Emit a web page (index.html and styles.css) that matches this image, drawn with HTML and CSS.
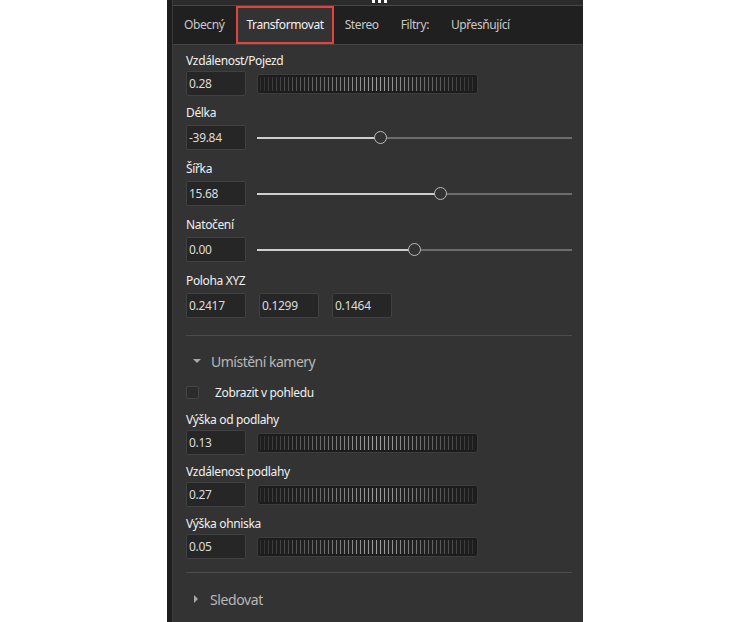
FILE: index.html
```html
<!DOCTYPE html>
<html>
<head>
<meta charset="utf-8">
<link rel="stylesheet" href="styles.css">
</head>
<body>
<div class="panel">
  <div class="inner">
    <div class="topbar"><div class="grip"><i></i><i></i><i></i></div></div>
    <div class="tabs">
      <div class="tab">Obecný</div>
      <div class="tab active">Transformovat</div>
      <div class="tab">Stereo</div>
      <div class="tab">Filtry:</div>
      <div class="tab">Upřesňující</div>
    </div>
    <div class="content">
      <div class="field jogfield">
        <div class="label">Vzdálenost/Pojezd</div>
        <div class="row"><div class="input">0.28</div><div class="jog"><div class="ticks"></div></div></div>
      </div>
      <div class="field slidefield">
        <div class="label">Délka</div>
        <div class="row"><div class="input">-39.84</div><div class="slider"><div class="fill" style="width:39.4%"></div><div class="thumb" style="left:39.4%"></div></div></div>
      </div>
      <div class="field slidefield">
        <div class="label">Šířka</div>
        <div class="row"><div class="input">15.68</div><div class="slider"><div class="fill" style="width:58.4%"></div><div class="thumb" style="left:58.4%"></div></div></div>
      </div>
      <div class="field slidefield">
        <div class="label">Natočení</div>
        <div class="row"><div class="input">0.00</div><div class="slider"><div class="fill" style="width:50.2%"></div><div class="thumb" style="left:50.2%"></div></div></div>
      </div>
      <div class="field xyzfield">
        <div class="label">Poloha XYZ</div>
        <div class="row xyz"><div class="input">0.2417</div><div class="input">0.1299</div><div class="input">0.1464</div></div>
      </div>
      <div class="sep"></div>
      <div class="expander"><span class="tri down"></span><span class="exp-text">Umístění kamery</span></div>
      <div class="check"><span class="box"></span><span class="check-text">Zobrazit v pohledu</span></div>
      <div class="field jogfield">
        <div class="label">Výška od podlahy</div>
        <div class="row"><div class="input">0.13</div><div class="jog"><div class="ticks"></div></div></div>
      </div>
      <div class="field jogfield">
        <div class="label">Vzdálenost podlahy</div>
        <div class="row"><div class="input">0.27</div><div class="jog"><div class="ticks"></div></div></div>
      </div>
      <div class="field jogfield last">
        <div class="label">Výška ohniska</div>
        <div class="row"><div class="input">0.05</div><div class="jog"><div class="ticks"></div></div></div>
      </div>
      <div class="sep sep2"></div>
      <div class="expander exp2"><span class="tri right"></span><span class="exp-text">Sledovat</span></div>
    </div>
  </div>
</div>
</body>
</html>
```
FILE: styles.css
```css
html, body {
  margin: 0;
  padding: 0;
  background: #ffffff;
  height: 622px;
  overflow: hidden;
  font-family: "Noto Sans", "Open Sans", sans-serif;
}
.panel {
  margin-left: 167px;
  width: 411px;
  height: 622px;
  background: #333333;
  border-left: 5px solid #1e1e1e;
}
.inner {
  height: 100%;
  border-left: 1px solid #3c3c3c;
  box-sizing: border-box;
}
.topbar {
  height: 5px;
  background: #2b2b2b;
  border-bottom: 1px solid #474747;
}
.grip {
  display: flex;
  gap: 3px;
  padding-left: 199px;
}
.grip i {
  display: block;
  width: 3px;
  height: 3px;
  background: #ffffff;
}
.tabs {
  display: flex;
  height: 38px;
  background: #202020;
  border-bottom: 1px solid #444444;
}
.tab {
  padding: 0 11px;
  line-height: 38px;
  font-size: 12px;
  letter-spacing: -0.4px;
  color: #c9c9c9;
}
.tab.active {
  background: #333333;
  color: #f2f2f2;
  box-shadow: inset 0 0 0 2px #e5423d;
  margin-left: 1px;
  padding: 0 10px;
}
.content {
  padding: 7px 11px 0 13px;
}
.label {
  height: 18px;
  line-height: 18px;
  font-size: 12px;
  letter-spacing: -0.35px;
  color: #f0f0f0;
}
.row {
  display: flex;
  align-items: center;
  gap: 11px;
  margin-top: 1px;
}
.field {
  margin-bottom: 8px;
}
.slidefield .row {
  margin-top: 3px;
}
.slidefield {
  margin-bottom: 10px;
}
.input {
  width: 60px;
  height: 25px;
  box-sizing: border-box;
  background: #262626;
  border: 1px solid #414141;
  border-radius: 2px;
  color: #dcdcdc;
  font-size: 12px;
  letter-spacing: -0.3px;
  line-height: 23px;
  padding-left: 2px;
  flex: none;
}
.jog {
  width: 221px;
  height: 20px;
  box-sizing: border-box;
  border: 1px solid #3d3d3d;
  border-radius: 3px;
  background: #1c1c1c;
  padding: 2px 2px;
}
.ticks {
  height: 100%;
  background:
    linear-gradient(90deg, rgba(28,28,28,0.85) 0%, rgba(28,28,28,0.1) 55%, rgba(28,28,28,0.85) 100%),
    repeating-linear-gradient(90deg, #b0b0b0 0 1px, transparent 1px 4px),
    #262626;
}
.slider {
  flex: 1;
  height: 2px;
  background: #6c6c6c;
  position: relative;
}
.fill {
  height: 2px;
  background: #cfcfcf;
}
.thumb {
  position: absolute;
  top: -6px;
  width: 13px;
  height: 13px;
  margin-left: -7px;
  box-sizing: border-box;
  border-radius: 50%;
  border: 1.5px solid #b9b9b9;
  background: #333333;
}
.xyz {
  gap: 13px;
  margin-top: 3px;
}
.sep {
  height: 1px;
  background: #4b4b4b;
  margin-top: 17px;
}
.expander {
  display: flex;
  align-items: center;
  height: 26px;
  margin-top: 12px;
}
.tri {
  width: 0;
  height: 0;
  margin-left: 7px;
  margin-right: 10px;
}
.tri.down {
  border-left: 4px solid transparent;
  border-right: 4px solid transparent;
  border-top: 4px solid #a8a8a8;
}
.tri.right {
  border-top: 4px solid transparent;
  border-bottom: 4px solid transparent;
  border-left: 4px solid #a8a8a8;
  margin-left: 8px;
  margin-right: 12px;
}
.exp-text {
  font-size: 14px;
  letter-spacing: -0.5px;
  color: #b8b8b8;
}
.check {
  display: flex;
  align-items: center;
  height: 20px;
  margin-top: 8px;
  margin-bottom: 9px;
}
.box {
  width: 13px;
  height: 13px;
  box-sizing: border-box;
  background: #2b2b2b;
  border: 1px solid #454545;
  border-radius: 2px;
  margin-right: 16px;
}
.check-text {
  font-size: 12px;
  letter-spacing: -0.35px;
  color: #f0f0f0;
}
.sep2 {
  margin-top: 13px;
}
.exp2 {
  margin-top: 13px;
}
.exp2 .exp-text {
  letter-spacing: -0.4px;
}
```
